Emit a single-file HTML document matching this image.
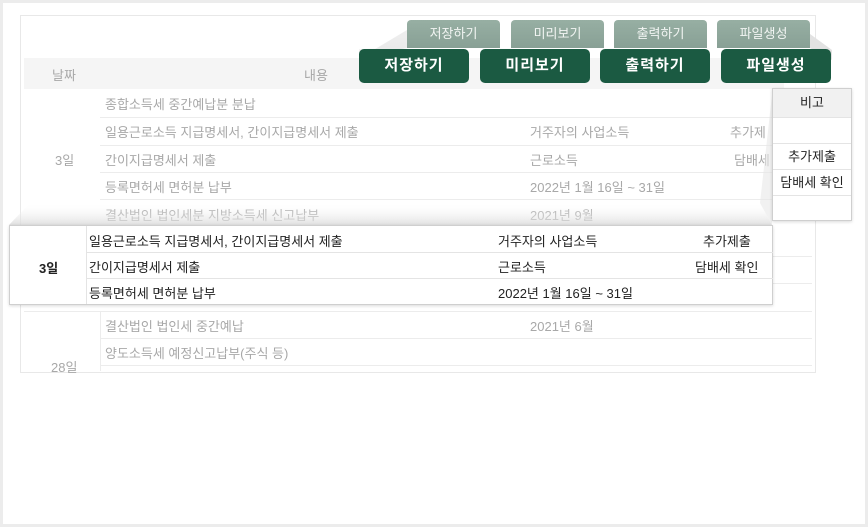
<!DOCTYPE html>
<html><head><meta charset="utf-8"><style>
*{margin:0;padding:0;box-sizing:border-box}
body{width:868px;height:527px;background:#fff;position:relative;overflow:hidden;font-family:"Liberation Sans","Noto Sans CJK KR",sans-serif;font-size:13px}
.frame{position:absolute;left:0;top:0;width:868px;height:527px;border:3px solid #ececec}
.card{position:absolute;left:20px;top:15px;width:796px;height:358px;border:1px solid #e8e8e8;background:#fff}
.a{position:absolute;white-space:nowrap}
.g{color:#a8a8a8}
.hl{position:absolute;height:1px;background:#ececec}
.fb{position:absolute;top:20px;height:28px;width:93px;border-radius:4px 4px 0 0;background:linear-gradient(#97afa3,#88a095);color:#f2f5f3;font-size:13px;text-align:center;line-height:28px}
.db{position:absolute;top:49px;height:34px;width:110px;border-radius:5px;background:#1b5a42;color:#fff;font-size:15px;font-weight:bold;text-align:center;line-height:34px;letter-spacing:1px}
.pop{position:absolute;background:#fff;border:1px solid #cfcfcf;box-shadow:0 1px 3px rgba(0,0,0,.15)}
.k{color:#222}
</style></head><body>
<div class="frame"></div>
<div class="card"></div>
<div class="a" style="left:24px;top:58px;width:760px;height:31px;background:#f5f5f5"></div>
<div class="a g" style="left:52px;top:65px">날짜</div>
<div class="a g" style="left:304px;top:65px">내용</div>
<div class="hl" style="left:100px;top:117px;width:712px"></div>
<div class="hl" style="left:100px;top:145px;width:712px"></div>
<div class="hl" style="left:100px;top:172px;width:712px"></div>
<div class="hl" style="left:100px;top:199px;width:712px"></div>
<div class="hl" style="left:100px;top:256px;width:712px"></div>
<div class="hl" style="left:100px;top:283px;width:712px"></div>
<div class="hl" style="left:24px;top:311px;width:788px"></div>
<div class="hl" style="left:100px;top:338px;width:712px"></div>
<div class="hl" style="left:100px;top:365px;width:712px"></div>
<div class="a" style="left:100px;top:311px;width:1px;height:60px;background:#ececec"></div>
<div class="a g" style="left:105px;top:94px">종합소득세 중간예납분 분납</div>
<div class="a g" style="left:105px;top:122px">일용근로소득 지급명세서, 간이지급명세서 제출</div>
<div class="a g" style="left:530px;top:122px">거주자의 사업소득</div>
<div class="a g" style="left:730px;top:122px">추가제</div>
<div class="a g" style="left:55px;top:150px">3일</div>
<div class="a g" style="left:105px;top:150px">간이지급명세서 제출</div>
<div class="a g" style="left:530px;top:150px">근로소득</div>
<div class="a g" style="left:734px;top:150px">담배세</div>
<div class="a g" style="left:105px;top:177px">등록면허세 면허분 납부</div>
<div class="a g" style="left:530px;top:177px">2022년 1월 16일 ~ 31일</div>
<div class="a g" style="left:105px;top:205px">결산법인 법인세분 지방소득세 신고납부</div>
<div class="a g" style="left:530px;top:205px">2021년 9월</div>
<div class="a g" style="left:105px;top:316px">결산법인 법인세 중간예납</div>
<div class="a g" style="left:530px;top:316px">2021년 6월</div>
<div class="a g" style="left:105px;top:343px">양도소득세 예정신고납부(주식 등)</div>
<div class="a g" style="left:51px;top:357px">28일</div>
<svg class="a" style="left:0;top:0" width="868" height="527">
<defs>
<linearGradient id="s1" x1="0" y1="0" x2="0" y2="1"><stop offset="0" stop-color="#fff" stop-opacity="0"/><stop offset="1" stop-color="#d8d8d8" stop-opacity=".8"/></linearGradient>
</defs>
<polygon points="407,30 407,48 359,49 359,60" fill="url(#s1)"/>
<polygon points="360,58 407,30 407,48" fill="#e6e6e6" opacity=".7"/>
<polygon points="810,34 832,50 832,60 810,48" fill="#e2e2e2"/>
<polygon points="30,203 760,203 772,225 9,225" fill="url(#s1)"/>
<polygon points="772,95 772,225 760,203" fill="#e8e8e8" opacity=".6"/>
</svg>
<div class="fb" style="left:407px">저장하기</div>
<div class="fb" style="left:511px">미리보기</div>
<div class="fb" style="left:614px">출력하기</div>
<div class="fb" style="left:717px">파일생성</div>
<div class="db" style="left:359px">저장하기</div>
<div class="db" style="left:480px">미리보기</div>
<div class="db" style="left:600px">출력하기</div>
<div class="db" style="left:721px">파일생성</div>
<div class="pop" style="left:772px;top:88px;width:80px;height:133px">
 <div style="height:28px;background:#f1f1f1;text-align:center;line-height:28px" class="k">비고</div>
 <div style="height:26px;border-top:1px solid #e4e4e4"></div>
 <div style="height:26px;border-top:1px solid #e4e4e4;text-align:center;line-height:25px" class="k">추가제출</div>
 <div style="height:26px;border-top:1px solid #e4e4e4;text-align:center;line-height:25px" class="k">담배세 확인</div>
 <div style="height:26px;border-top:1px solid #e4e4e4"></div>
</div>
<div class="pop" style="left:9px;top:225px;width:764px;height:80px">
 <div class="a" style="left:76px;top:0;width:1px;height:78px;background:#e4e4e4"></div>
 <div class="a" style="left:77px;top:26px;width:686px;height:1px;background:#e4e4e4"></div>
 <div class="a" style="left:77px;top:52px;width:686px;height:1px;background:#e4e4e4"></div>
 <div class="a k" style="left:29px;top:32px;font-weight:bold">3일</div>
 <div class="a k" style="left:79px;top:5px">일용근로소득 지급명세서, 간이지급명세서 제출</div>
 <div class="a k" style="left:488px;top:5px">거주자의 사업소득</div>
 <div class="a k" style="left:693px;top:5px">추가제출</div>
 <div class="a k" style="left:79px;top:31px">간이지급명세서 제출</div>
 <div class="a k" style="left:488px;top:31px">근로소득</div>
 <div class="a k" style="left:685px;top:31px">담배세 확인</div>
 <div class="a k" style="left:79px;top:57px">등록면허세 면허분 납부</div>
 <div class="a k" style="left:488px;top:57px">2022년 1월 16일 ~ 31일</div>
</div>
</body></html>
